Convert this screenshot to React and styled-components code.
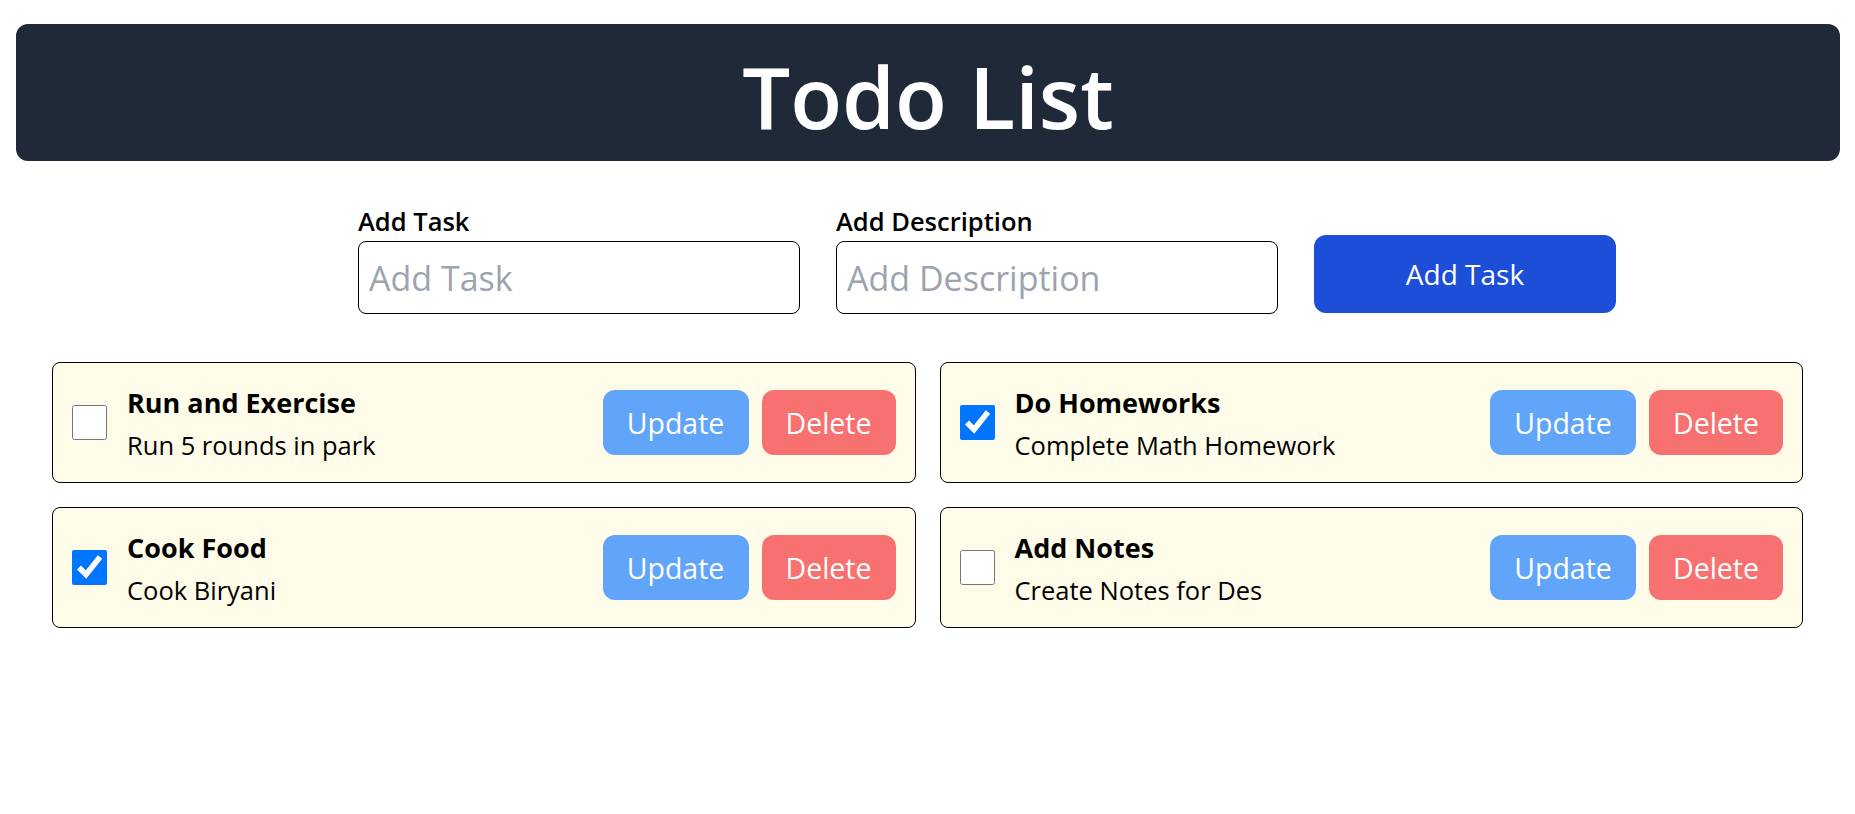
import React from "react";
import styled, { createGlobalStyle } from "styled-components";

const Global = createGlobalStyle`
  body {
    margin: 0;
    background: #ffffff;
    font-family: "Open Sans", "Noto Sans", sans-serif;
    color: #000000;
  }
`;

const Page = styled.div`
  padding: 24px 15px 40px 16px;
`;

const Header = styled.header`
  height: 137px;
  background-color: #1f2937;
  border-radius: 12px;
  display: flex;
  align-items: center;
  justify-content: center;
`;

const Title = styled.h1`
  margin: 0;
  color: #ffffff;
  font-size: 85px;
  font-weight: 600;
  line-height: 1;
  padding-top: 8px;
`;

const Form = styled.form`
  display: flex;
  align-items: flex-end;
  gap: 36px;
  margin-top: 47px;
  padding-left: 342px;
`;

const Field = styled.div`
  display: flex;
  flex-direction: column;
  gap: 7px;
`;

const Label = styled.label`
  font-size: 25.5px;
  font-weight: 600;
  line-height: 26px;
`;

const Input = styled.input`
  box-sizing: border-box;
  width: 442px;
  height: 73px;
  border: 1px solid #000000;
  border-radius: 8px;
  padding: 0 10px;
  font-family: inherit;
  font-size: 34px;
  outline: none;
  &::placeholder {
    color: #9ca3af;
  }
`;

const AddButton = styled.button`
  width: 302px;
  height: 78px;
  margin-bottom: 1px;
  border: none;
  border-radius: 12px;
  background-color: #1d4ed8;
  color: #ffffff;
  font-family: inherit;
  font-size: 28px;
`;

const List = styled.div`
  display: grid;
  grid-template-columns: 1fr 1fr;
  gap: 24px;
  margin: 48px 37px 0 36px;
`;

const Card = styled.div`
  height: 121px;
  box-sizing: border-box;
  border: 1px solid #000000;
  border-radius: 8px;
  background-color: #fefce8;
  display: flex;
  align-items: center;
  padding: 0 19px 0 19px;
`;

const Check = styled.input`
  width: 35px;
  height: 35px;
  margin: 0 20px 0 0;
  flex-shrink: 0;
`;

const Text = styled.div`
  flex: 1;
  display: flex;
  flex-direction: column;
  gap: 8px;
`;

const TaskTitle = styled.div`
  font-size: 27px;
  font-weight: 700;
  line-height: 36px;
`;

const TaskDesc = styled.div`
  font-size: 25.5px;
  line-height: 32px;
`;

const Actions = styled.div`
  display: flex;
  gap: 13px;
`;

const ActionButton = styled.button`
  height: 65px;
  width: ${(p) => p.$w}px;
  border: none;
  border-radius: 12px;
  background-color: ${(p) => p.$bg};
  color: #ffffff;
  font-family: inherit;
  font-size: 28.5px;
`;

const todos = [
  { title: "Run and Exercise", desc: "Run 5 rounds in park", done: false },
  { title: "Do Homeworks", desc: "Complete Math Homework", done: true },
  { title: "Cook Food", desc: "Cook Biryani", done: true },
  { title: "Add Notes", desc: "Create Notes for Des", done: false },
];

export default function App() {
  return (
    <Page>
      <Global />
      <Header>
        <Title>Todo List</Title>
      </Header>
      <Form onSubmit={(e) => e.preventDefault()}>
        <Field>
          <Label>Add Task</Label>
          <Input placeholder="Add Task" />
        </Field>
        <Field>
          <Label>Add Description</Label>
          <Input placeholder="Add Description" />
        </Field>
        <AddButton type="submit">Add Task</AddButton>
      </Form>
      <List>
        {todos.map((t) => (
          <Card key={t.title}>
            <Check type="checkbox" defaultChecked={t.done} />
            <Text>
              <TaskTitle>{t.title}</TaskTitle>
              <TaskDesc>{t.desc}</TaskDesc>
            </Text>
            <Actions>
              <ActionButton $bg="#60a5fa" $w={146}>Update</ActionButton>
              <ActionButton $bg="#f87171" $w={134}>Delete</ActionButton>
            </Actions>
          </Card>
        ))}
      </List>
    </Page>
  );
}
